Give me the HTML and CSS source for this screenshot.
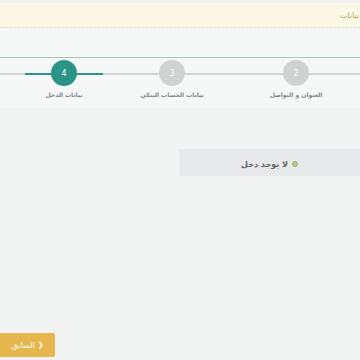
FILE: index.html
```html
<!DOCTYPE html>
<html lang="ar" dir="rtl">
  <head>
    <meta charset="UTF-8" />
    <meta name="viewport" content="width=device-width, initial-scale=1.0" />
    <title>بيانات الدخل</title>
    <link rel="stylesheet" href="styles.css">
  </head>
  <body>
    <div class="page">
      <div class="notice"><span class="notice-text">بيانات</span></div>
      <div class="toolbar"></div>

      <div class="steps">
        <div class="step step-two">
          <span class="step-num">2</span>
          <span class="step-label">العنوان و التواصل</span>
        </div>
        <div class="step step-three">
          <span class="step-num">3</span>
          <span class="step-label">بيانات الحساب البنكي</span>
        </div>
        <div class="step step-four active">
          <span class="step-num">4</span>
          <span class="step-label">بيانات الدخل</span>
        </div>
      </div>

      <div class="content">
        <div class="empty">
          <span class="empty-dot"></span>
          <span>لا يوجد دخل</span>
        </div>
      </div>

      <div class="actions">
        <button class="btn-prev"><span class="chev">&#x276E;</span> السابق</button>
      </div>
    </div>
  </body>
</html>
```

FILE: styles.css
```css
body {
  margin: 0;
  font-family: "DejaVu Sans", "Noto Sans", sans-serif;
  background-color: #f1f3f3;
  color: #666;
}
.page {
  display: flex;
  flex-direction: column;
  min-height: 360px;
  overflow: hidden;
}
.notice {
  margin-top: 3px;
  height: 24px;
  background-color: #fbf8e6;
  border-bottom: 1px dotted #d9d2b4;
  display: flex;
  align-items: center;
}
.notice-text {
  margin-right: 1px;
  font-size: 8px;
  color: #c2a557;
}
.toolbar {
  height: 29px;
  background-color: #f6f8f8;
  border-bottom: 1px solid #aac5c4;
}
.steps {
  display: flex;
  height: 50px;
  padding-right: 25px;
  background-color: #f6f8f8;
  background-image: linear-gradient(#d2d5d5, #d2d5d5);
  background-size: 100% 2px;
  background-position: 0 15px;
  background-repeat: no-repeat;
}
.step {
  width: 78px;
  display: flex;
  flex-direction: column;
  align-items: center;
  padding-top: 2px;
}
.step-three {
  margin-right: 46px;
}
.step-four {
  margin-right: 30px;
}
.step.active {
  background-image: linear-gradient(#2b9486, #2b9486);
  background-size: 100% 2px;
  background-position: 0 15px;
  background-repeat: no-repeat;
}
.step-num {
  width: 26px;
  height: 26px;
  border-radius: 50%;
  background-color: #ced2d1;
  color: #fff;
  font-size: 8px;
  display: flex;
  align-items: center;
  justify-content: center;
}
.active .step-num {
  background-color: #2b9486;
}
.step-label {
  margin-top: 5px;
  font-size: 6px;
  font-weight: bold;
  color: #7d8484;
  white-space: nowrap;
}
.content {
  padding-top: 41px;
}
.empty {
  width: 181px;
  height: 27px;
  padding-top: 3px;
  box-sizing: border-box;
  background-color: #e8e9ea;
  border-radius: 2px 0 0 2px;
  display: flex;
  align-items: center;
  justify-content: center;
  gap: 4px;
  font-size: 8px;
  font-weight: bold;
  color: #5a6764;
}
.empty-dot {
  width: 4px;
  height: 4px;
  border-radius: 50%;
  background-color: #d0c66a;
  border: 1px solid #7fb49a;
}
.actions {
  margin-top: auto;
  margin-bottom: 3px;
  display: flex;
  justify-content: flex-end;
}
.btn-prev {
  width: 55px;
  height: 24px;
  border: none;
  border-radius: 0 2px 2px 0;
  background-color: #e7b74f;
  color: #fff;
  font-family: "DejaVu Sans", sans-serif;
  font-size: 8px;
  padding: 0;
  display: flex;
  align-items: center;
  justify-content: center;
  gap: 3px;
}
.chev {
  font-size: 7px;
}
```
